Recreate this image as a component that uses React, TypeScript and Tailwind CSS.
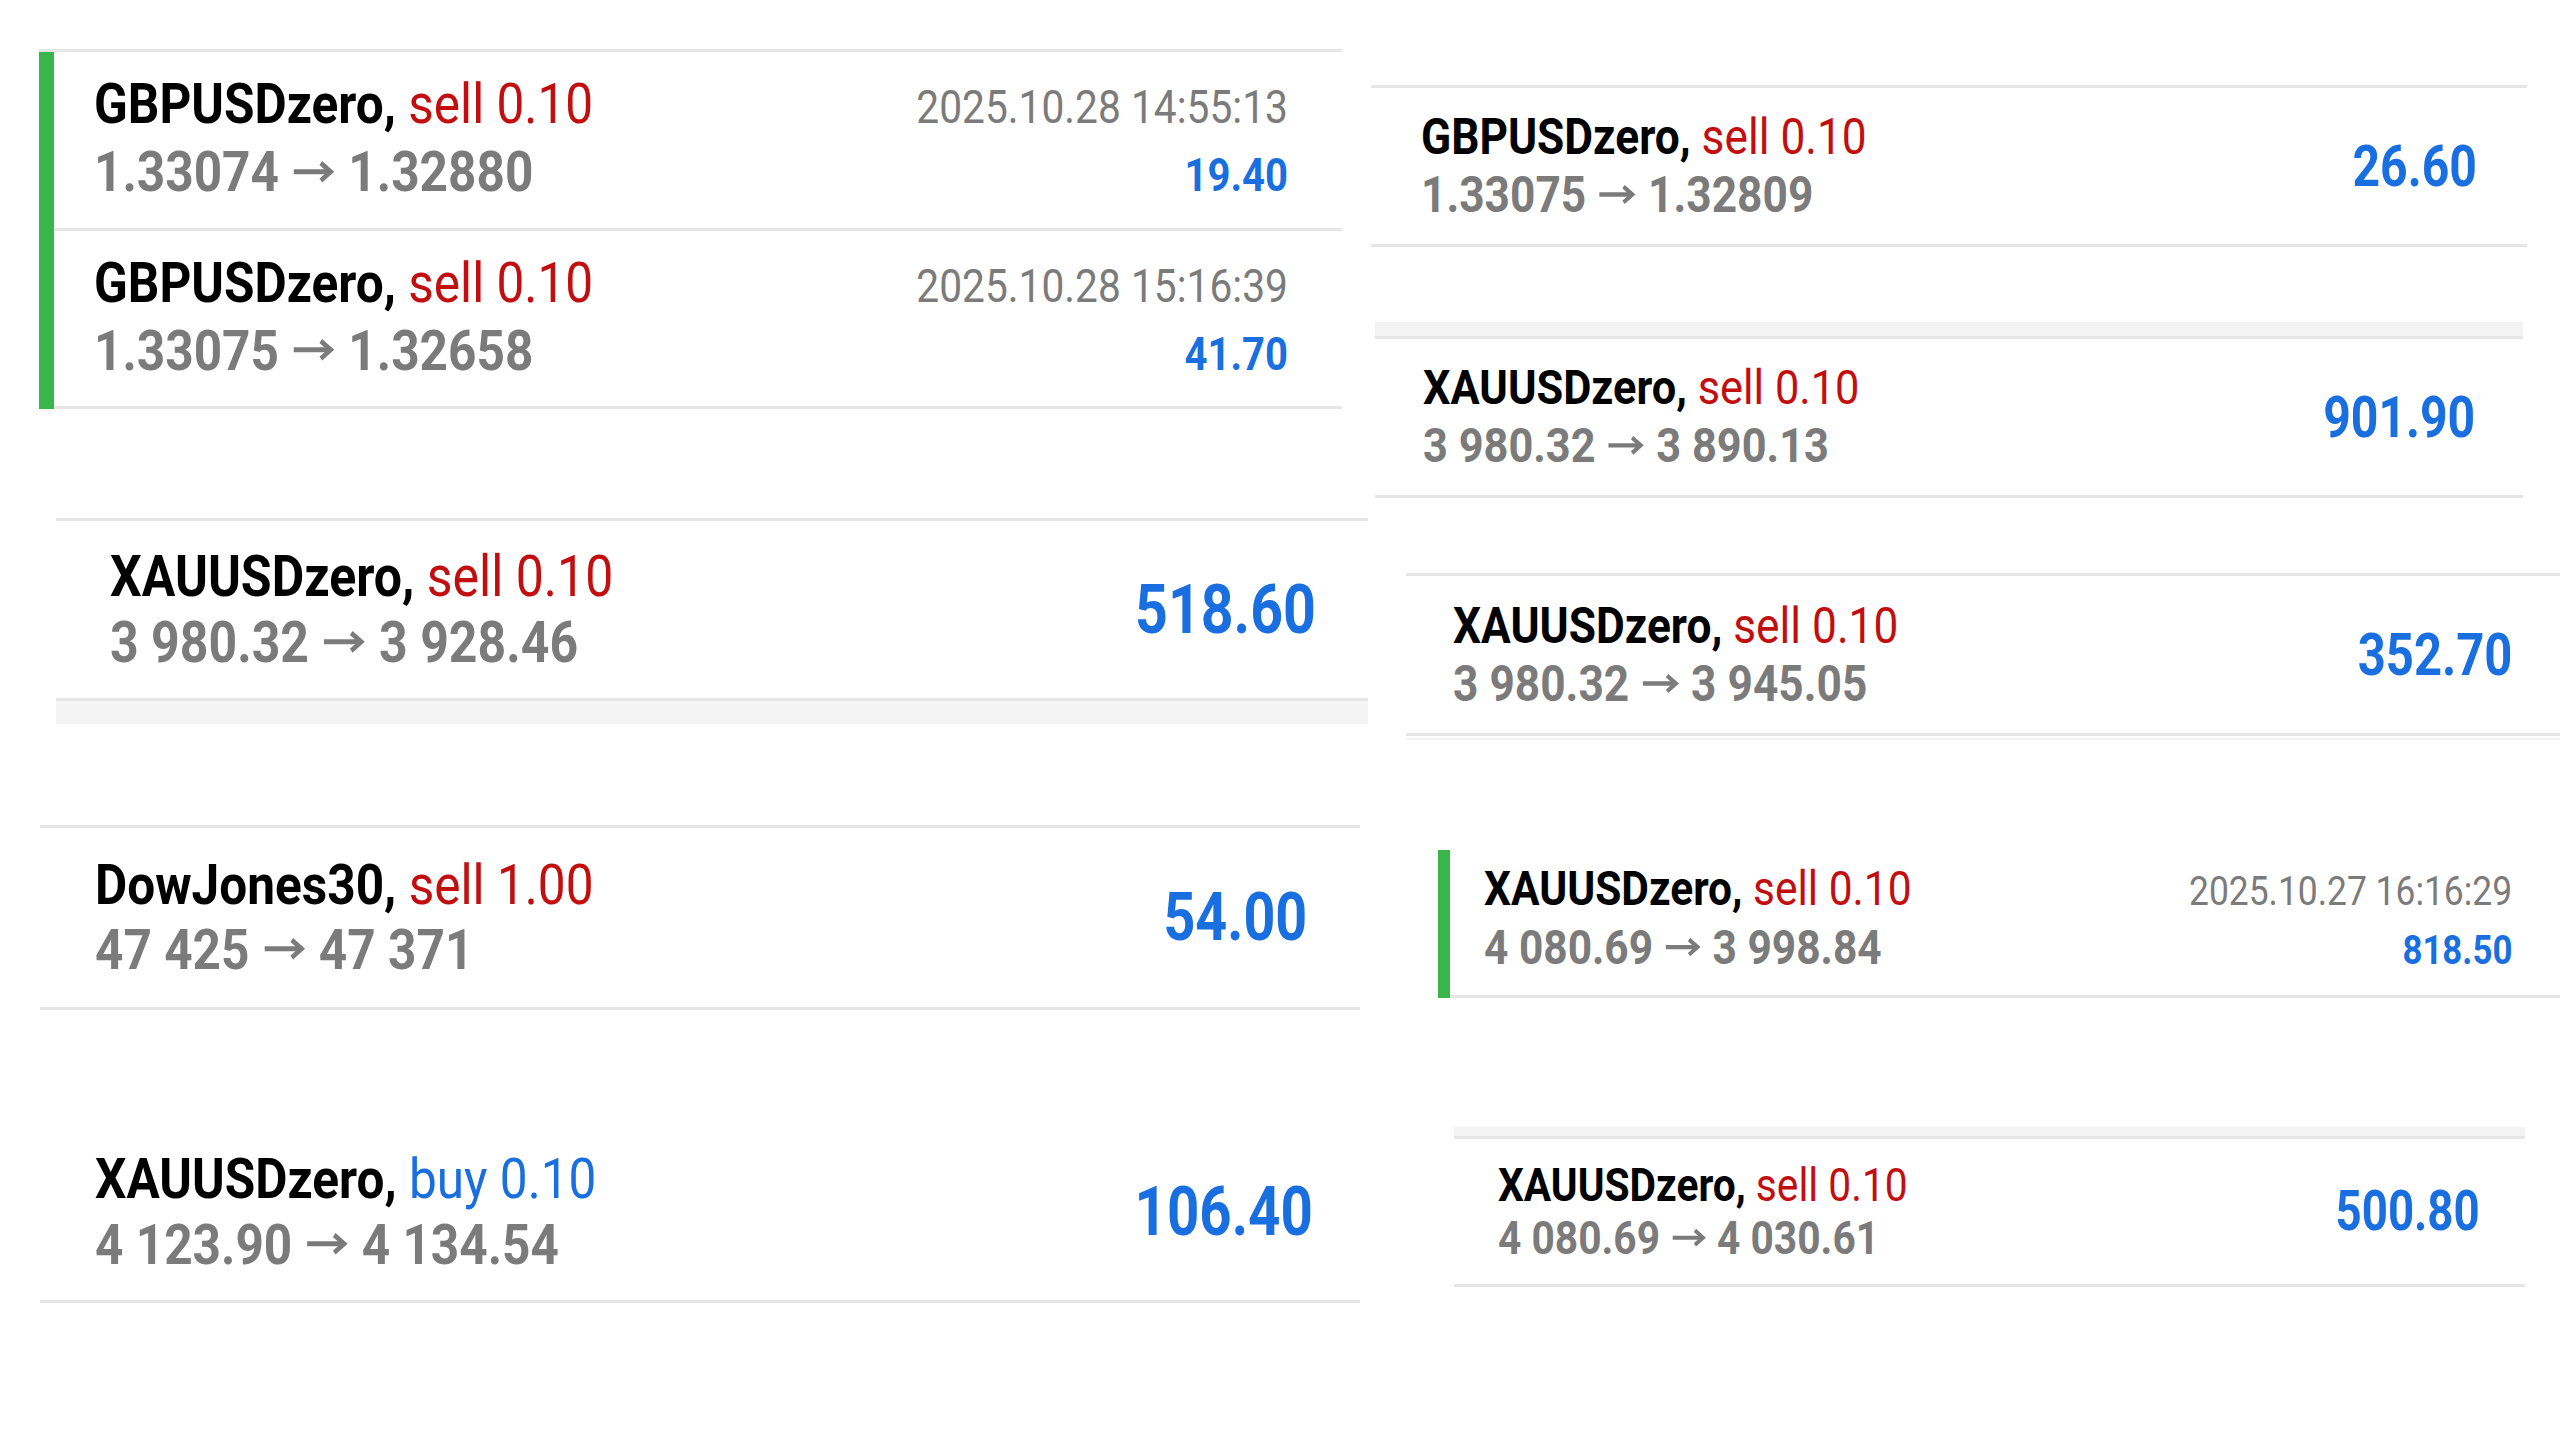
// Trade history collage — closed positions from a mobile terminal, two columns.

type Trade = {
  sym: string;
  side: 'sell' | 'buy';
  lot: string;
  from: string;
  to: string;
  value: string;
  date?: string;
};

const RED = 'text-[#c20e0e]';
const BLUE = 'text-[#1a6fe0]';

// ---- one trade row ---------------------------------------------------------

interface RowProps {
  t: Trade;
  text: string; // font size + line height of the two left lines
  value: string; // font size of the profit
  date?: string; // font size + line height of date / small profit
  pad: string; // padding + height of the row
}

function Head({ t }: { t: Trade }) {
  return (
    <>
      <span className="font-bold text-black">{t.sym}, </span>
      <span className={t.side === 'sell' ? RED : BLUE}>
        {t.side} {t.lot}
      </span>
    </>
  );
}

// heavy "open → close" arrow, sized in em so it follows the line's font
function Arrow() {
  return (
    <svg
      viewBox="0 0 40 20"
      className="mx-[0.27em] inline-block h-[0.42em] w-[0.86em] align-[0.14em]"
      fill="none"
      stroke="currentColor"
      strokeWidth={4.2}
      strokeLinecap="butt"
      strokeLinejoin="miter"
    >
      <path d="M1 10H36" />
      <path d="M27 2.5L36.5 10L27 17.5" />
    </svg>
  );
}

function Prices({ t }: { t: Trade }) {
  return (
    <span className="font-bold text-[#7b7b7b]">
      {t.from}
      <Arrow />
      {t.to}
    </span>
  );
}

function Row({ t, text, value, date, pad }: RowProps) {
  if (t.date) {
    // rows with a timestamp: two baseline-aligned lines
    return (
      <div className={`flex flex-col justify-center ${pad}`}>
        <div className={`flex items-baseline justify-between ${text}`}>
          <div className="origin-left scale-x-[0.885] whitespace-nowrap">
            <Head t={t} />
          </div>
          <div className={`origin-right scale-x-[0.885] whitespace-nowrap text-[#7b7b7b] ${date}`}>
            {t.date}
          </div>
        </div>
        <div className={`flex items-baseline justify-between ${text}`}>
          <div className="origin-left scale-x-[0.885] whitespace-nowrap">
            <Prices t={t} />
          </div>
          <div className={`origin-right scale-x-[0.87] whitespace-nowrap font-bold ${BLUE} ${date}`}>
            {t.value}
          </div>
        </div>
      </div>
    );
  }

  return (
    <div className={`flex items-center justify-between ${pad}`}>
      <div className={`origin-left scale-x-[0.885] whitespace-nowrap ${text}`}>
        <div>
          <Head t={t} />
        </div>
        <div>
          <Prices t={t} />
        </div>
      </div>
      <div className={`origin-right scale-x-[0.83] whitespace-nowrap font-bold leading-none ${BLUE} ${value}`}>
        {t.value}
      </div>
    </div>
  );
}

// ---- data ------------------------------------------------------------------

const gbp1: Trade = { sym: 'GBPUSDzero', side: 'sell', lot: '0.10', from: '1.33074', to: '1.32880', value: '19.40', date: '2025.10.28 14:55:13' };
const gbp2: Trade = { sym: 'GBPUSDzero', side: 'sell', lot: '0.10', from: '1.33075', to: '1.32658', value: '41.70', date: '2025.10.28 15:16:39' };
const xau1: Trade = { sym: 'XAUUSDzero', side: 'sell', lot: '0.10', from: '3 980.32', to: '3 928.46', value: '518.60' };
const dow: Trade = { sym: 'DowJones30', side: 'sell', lot: '1.00', from: '47 425', to: '47 371', value: '54.00' };
const xauBuy: Trade = { sym: 'XAUUSDzero', side: 'buy', lot: '0.10', from: '4 123.90', to: '4 134.54', value: '106.40' };
const gbp3: Trade = { sym: 'GBPUSDzero', side: 'sell', lot: '0.10', from: '1.33075', to: '1.32809', value: '26.60' };
const xau2: Trade = { sym: 'XAUUSDzero', side: 'sell', lot: '0.10', from: '3 980.32', to: '3 890.13', value: '901.90' };
const xau3: Trade = { sym: 'XAUUSDzero', side: 'sell', lot: '0.10', from: '3 980.32', to: '3 945.05', value: '352.70' };
const xau4: Trade = { sym: 'XAUUSDzero', side: 'sell', lot: '0.10', from: '4 080.69', to: '3 998.84', value: '818.50', date: '2025.10.27 16:16:29' };
const xau5: Trade = { sym: 'XAUUSDzero', side: 'sell', lot: '0.10', from: '4 080.69', to: '4 030.61', value: '500.80' };

const LINE = 'border-[#e6e6e6]';

export default function App() {
  return (
    <div className="flex h-[1440px] w-[2560px] overflow-hidden bg-white font-['Roboto',sans-serif]">
      {/* ---- left column ---- */}
      <div className="flex w-[1370px] shrink-0 flex-col">
        <div className={`ml-[39px] mt-[49px] w-[1303px] border-t-[3px] ${LINE} flex`}>
          <div className="w-[15px] shrink-0 bg-[#3ab54a]" />
          <div className="flex-1">
            <div className={`border-b-[3px] ${LINE}`}>
              <Row t={gbp1} text="text-[56px] leading-[65px]" value="" date="text-[46px]" pad="h-[176px] pl-[40px] pr-[54px]" />
            </div>
            <div className={`border-b-[3px] ${LINE}`}>
              <Row t={gbp2} text="text-[56px] leading-[65px]" value="" date="text-[46px]" pad="h-[175px] pl-[40px] pr-[54px]" />
            </div>
          </div>
        </div>

        <div className={`ml-[56px] mt-[109px] w-[1312px] border-y-[3px] ${LINE}`}>
          <Row t={xau1} text="text-[56.5px] leading-[66px]" value="text-[69px]" pad="h-[177px] pl-[54px] pr-[52px]" />
        </div>
        <div className="ml-[56px] h-[23px] w-[1312px] bg-[#f4f4f4]" />

        <div className={`ml-[40px] mt-[101px] w-[1320px] border-y-[3px] ${LINE}`}>
          <Row t={dow} text="text-[56px] leading-[65px]" value="text-[67px]" pad="h-[179px] pl-[55px] pr-[53px]" />
        </div>

        <div className={`ml-[40px] mt-[113px] w-[1320px] border-b-[3px] ${LINE}`}>
          <Row t={xauBuy} text="text-[56px] leading-[66px]" value="text-[68px]" pad="h-[177px] pl-[55px] pr-[47px]" />
        </div>
      </div>

      {/* ---- right column ---- */}
      <div className="flex flex-1 flex-col">
        <div className={`ml-[1px] mt-[85px] w-[1156px] border-y-[3px] ${LINE}`}>
          <Row t={gbp3} text="text-[50px] leading-[58px]" value="text-[58px]" pad="h-[156px] pl-[50px] pr-[50px]" />
        </div>

        <div className="ml-[5px] mt-[75px] h-[14px] w-[1148px] bg-[#f3f3f3]" />
        <div className={`ml-[5px] w-[1148px] border-y-[3px] ${LINE}`}>
          <Row t={xau2} text="text-[49px] leading-[58px]" value="text-[58px]" pad="h-[156px] pl-[48px] pr-[48px]" />
        </div>

        <div className={`ml-[36px] mt-[75px] w-[1154px] border-y-[3px] ${LINE}`}>
          <Row t={xau3} text="text-[50px] leading-[58px]" value="text-[59px]" pad="h-[157px] pl-[47px] pr-[48px]" />
        </div>
        <div className="ml-[36px] mt-[2px] h-[2px] w-[1154px] bg-[#f2f2f2]" />

        <div className="ml-[68px] mt-[110px] flex w-[1122px]">
          <div className="w-[12px] shrink-0 bg-[#3ab54a]" />
          <div className={`flex-1 border-b-[3px] ${LINE}`}>
            <Row t={xau4} text="text-[48px] leading-[56px]" value="" date="text-[40px]" pad="h-[145px] pl-[34px] pr-[48px] pb-[5px]" />
          </div>
        </div>

        <div className="ml-[84px] mt-[129px] h-[9px] w-[1071px] bg-[#f3f3f3]" />
        <div className={`ml-[84px] w-[1071px] border-y-[3px] ${LINE}`}>
          <Row t={xau5} text="text-[46px] leading-[53px]" value="text-[55px]" pad="h-[145px] pl-[44px] pr-[45px]" />
        </div>
      </div>
    </div>
  );
}
